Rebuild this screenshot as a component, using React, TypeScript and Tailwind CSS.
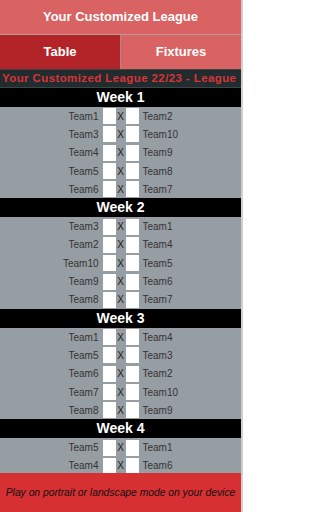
const weeks: { title: string; games: [string, string][] }[] = [
  {
    title: "Week 1",
    games: [
      ["Team1", "Team2"],
      ["Team3", "Team10"],
      ["Team4", "Team9"],
      ["Team5", "Team8"],
      ["Team6", "Team7"],
    ],
  },
  {
    title: "Week 2",
    games: [
      ["Team3", "Team1"],
      ["Team2", "Team4"],
      ["Team10", "Team5"],
      ["Team9", "Team6"],
      ["Team8", "Team7"],
    ],
  },
  {
    title: "Week 3",
    games: [
      ["Team1", "Team4"],
      ["Team5", "Team3"],
      ["Team6", "Team2"],
      ["Team7", "Team10"],
      ["Team8", "Team9"],
    ],
  },
  {
    title: "Week 4",
    games: [
      ["Team5", "Team1"],
      ["Team4", "Team6"],
    ],
  },
];

export default function App() {
  return (
    <div className="h-[512px] w-[243px] overflow-hidden bg-[#cfcfcf] font-['Liberation_Sans',Arial,sans-serif]">
      <div className="flex h-full w-[241px] flex-col">
        <header className="flex h-[35px] shrink-0 items-center justify-center border-b border-[#b59a9a] bg-[#d96262] text-[13px] font-semibold text-white">
          Your Customized League
        </header>
        <nav className="grid h-[34px] shrink-0 grid-cols-[121px_1fr] text-[13px] font-bold text-white">
          <div className="flex items-center justify-center border-r border-[#a88] bg-[#b32428]">
            Table
          </div>
          <div className="flex items-center justify-center bg-[#d96262]">
            Fixtures
          </div>
        </nav>
        <div className="flex h-[19px] shrink-0 items-center overflow-hidden whitespace-nowrap border-y border-[#3c4649] bg-[#222b2e] pl-[2px] text-[11.5px] font-semibold tracking-[0.4px] text-[#d7353a]">
          Your Customized League 22/23 - League
        </div>
        <main className="flex-1 overflow-hidden bg-[#979ea3]">
          {weeks.map((week) => (
            <section key={week.title}>
              <h2 className="flex h-[19px] items-center justify-center bg-black text-[14px] font-bold text-white">
                {week.title}
              </h2>
              {week.games.map(([home, away]) => (
                <div
                  key={home + away}
                  className="grid h-[18.3px] grid-cols-[1fr_13px_10px_13px_1fr] items-center text-[10px] text-[#333]"
                >
                  <span className="pr-[4px] text-right">{home}</span>
                  <span className="h-[16px] bg-white" />
                  <span className="text-center text-[#1a1a1a]">X</span>
                  <span className="h-[16px] bg-white" />
                  <span className="pl-[4px]">{away}</span>
                </div>
              ))}
            </section>
          ))}
        </main>
        <footer className="flex h-[39px] shrink-0 items-center justify-center bg-[#d63033] text-[10.3px] italic text-[#111]">
          Play on portrait or landscape mode on your device
        </footer>
      </div>
    </div>
  );
}
